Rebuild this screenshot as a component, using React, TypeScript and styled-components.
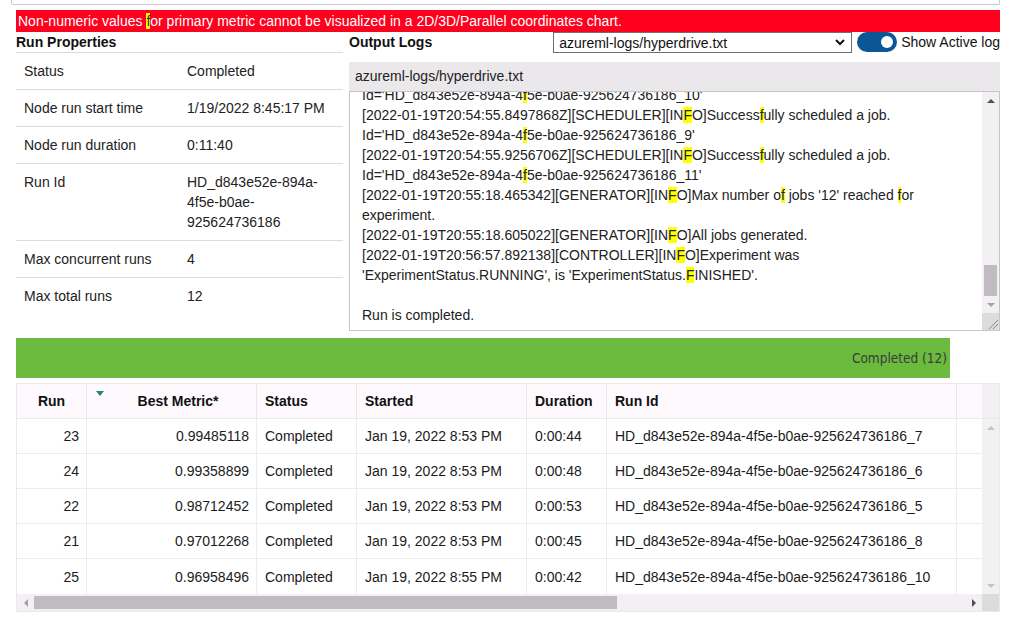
import React from 'react';
import styled, { createGlobalStyle } from 'styled-components';

const GlobalStyle = createGlobalStyle`
    html, body {
        margin: 0;
        padding: 0;
        background: #ffffff;
    }
    body {
        font-family: 'Liberation Sans', Arial, sans-serif;
        font-size: 14px;
        color: #1f1f1f;
    }
`;

type Prop = { label: string; value: React.ReactNode };

const runProps: Prop[] = [
    { label: 'Status', value: 'Completed' },
    { label: 'Node run start time', value: '1/19/2022 8:45:17 PM' },
    { label: 'Node run duration', value: '0:11:40' },
    {
        label: 'Run Id',
        value: (
            <>
                HD_d843e52e-894a-
                <br />
                4f5e-b0ae-
                <br />
                925624736186
            </>
        ),
    },
    { label: 'Max concurrent runs', value: '4' },
    { label: 'Max total runs', value: '12' },
];

const runs = [
    { run: 23, metric: '0.99485118', started: 'Jan 19, 2022 8:53 PM', duration: '0:00:44', id: 'HD_d843e52e-894a-4f5e-b0ae-925624736186_7' },
    { run: 24, metric: '0.99358899', started: 'Jan 19, 2022 8:53 PM', duration: '0:00:48', id: 'HD_d843e52e-894a-4f5e-b0ae-925624736186_6' },
    { run: 22, metric: '0.98712452', started: 'Jan 19, 2022 8:53 PM', duration: '0:00:53', id: 'HD_d843e52e-894a-4f5e-b0ae-925624736186_5' },
    { run: 21, metric: '0.97012268', started: 'Jan 19, 2022 8:53 PM', duration: '0:00:45', id: 'HD_d843e52e-894a-4f5e-b0ae-925624736186_8' },
    { run: 25, metric: '0.96958496', started: 'Jan 19, 2022 8:55 PM', duration: '0:00:42', id: 'HD_d843e52e-894a-4f5e-b0ae-925624736186_10' },
];

const COLS = '70px 170px 100px 170px 80px 350px 25px';

const Info = () => (
    <>
        [IN<Mark>F</Mark>O]
    </>
);

const Arrow: React.FC<{ dir: 'up' | 'down' | 'left' | 'right'; color?: string }> = ({ dir, color = '#7a7a7a' }) => {
    const pts = {
        up: '0,5 4,1 8,5',
        down: '0,1 8,1 4,5',
        left: '5,0 5,8 1,4',
        right: '1,0 1,8 5,4',
    }[dir];
    const w = dir === 'up' || dir === 'down' ? 8 : 6;
    const h = dir === 'up' || dir === 'down' ? 6 : 8;
    return (
        <svg width={w} height={h} viewBox={`0 0 ${w} ${h}`}>
            <polygon points={pts} fill={color} />
        </svg>
    );
};

const App: React.FC = () => {
    return (
        <Page>
            <GlobalStyle />
            <TopStub />
            <Banner>
                Non-numeric values <Mark>f</Mark>or primary metric cannot be visualized in a 2D/3D/Parallel coordinates chart.
            </Banner>
            <Columns>
                <PropsPanel>
                    <PanelTitle>Run Properties</PanelTitle>
                    {runProps.map((p) => (
                        <PropRow key={p.label}>
                            <PropLabel>{p.label}</PropLabel>
                            <PropValue>{p.value}</PropValue>
                        </PropRow>
                    ))}
                </PropsPanel>
                <LogsPanel>
                    <LogsToolbar>
                        <PanelTitle>Output Logs</PanelTitle>
                        <SelectWrap>
                            <Select defaultValue="hyperdrive">
                                <option value="hyperdrive">azureml-logs/hyperdrive.txt</option>
                            </Select>
                            <Chevron width="10" height="7" viewBox="0 0 10 7">
                                <polyline points="1,1 5,5 9,1" fill="none" stroke="#111" strokeWidth="2" />
                            </Chevron>
                        </SelectWrap>
                        <Toggle>
                            <Knob />
                        </Toggle>
                        <ToggleLabel>Show Active log</ToggleLabel>
                    </LogsToolbar>
                    <LogFrame>
                        <LogHeader>azureml-logs/hyperdrive.txt</LogHeader>
                        <LogArea>
                            <LogText>
                                <div>
                                    Id='HD_d843e52e-894a-4<Mark>f</Mark>5e-b0ae-925624736186_10'
                                </div>
                                <div>
                                    [2022-01-19T20:54:55.8497868Z][SCHEDULER]
                                    <Info />
                                    Success<Mark>f</Mark>ully scheduled a job.
                                </div>
                                <div>
                                    Id='HD_d843e52e-894a-4<Mark>f</Mark>5e-b0ae-925624736186_9'
                                </div>
                                <div>
                                    [2022-01-19T20:54:55.9256706Z][SCHEDULER]
                                    <Info />
                                    Success<Mark>f</Mark>ully scheduled a job.
                                </div>
                                <div>
                                    Id='HD_d843e52e-894a-4<Mark>f</Mark>5e-b0ae-925624736186_11'
                                </div>
                                <div>
                                    [2022-01-19T20:55:18.465342][GENERATOR]
                                    <Info />
                                    Max number o<Mark>f</Mark> jobs '12' reached <Mark>f</Mark>or
                                </div>
                                <div>experiment.</div>
                                <div>
                                    [2022-01-19T20:55:18.605022][GENERATOR]
                                    <Info />
                                    All jobs generated.
                                </div>
                                <div>
                                    [2022-01-19T20:56:57.892138][CONTROLLER]
                                    <Info />
                                    Experiment was
                                </div>
                                <div>
                                    'ExperimentStatus.RUNNING', is 'ExperimentStatus.<Mark>F</Mark>INISHED'.
                                </div>
                                <div>&nbsp;</div>
                                <div>Run is completed.</div>
                            </LogText>
                            <VScroll>
                                <ScrollBtn>
                                    <Arrow dir="up" color="#505050" />
                                </ScrollBtn>
                                <LogTrack>
                                    <Thumb $length={31} />
                                </LogTrack>
                                <ScrollBtn>
                                    <Arrow dir="down" color="#a3a3a3" />
                                </ScrollBtn>
                                <Resizer>
                                    <svg width="12" height="12" viewBox="0 0 12 12">
                                        <line x1="2" y1="11" x2="11" y2="2" stroke="#888" strokeWidth="1" />
                                        <line x1="6" y1="11" x2="11" y2="6" stroke="#888" strokeWidth="1" />
                                    </svg>
                                </Resizer>
                            </VScroll>
                        </LogArea>
                    </LogFrame>
                </LogsPanel>
            </Columns>
            <StatusBar>
                <StatusLabel>Completed (12)</StatusLabel>
            </StatusBar>
            <RunsTable>
                <HeaderRow>
                    <HeadCell $align="center">Run</HeadCell>
                    <HeadCell $align="center" $indent={13}>
                        <SortMark />
                        Best Metric*
                    </HeadCell>
                    <HeadCell>Status</HeadCell>
                    <HeadCell>Started</HeadCell>
                    <HeadCell>Duration</HeadCell>
                    <HeadCell>Run Id</HeadCell>
                    <HeadCell />
                    <ScrollCap />
                </HeaderRow>
                <BodyWrap>
                    <Rows>
                        {runs.map((r) => (
                            <Row key={r.id}>
                                <Cell $align="right">{r.run}</Cell>
                                <Cell $align="right">{r.metric}</Cell>
                                <Cell>Completed</Cell>
                                <Cell>{r.started}</Cell>
                                <Cell>{r.duration}</Cell>
                                <Cell>{r.id}</Cell>
                                <Cell />
                            </Row>
                        ))}
                    </Rows>
                    <TableVScroll>
                        <ScrollBtn>
                            <Arrow dir="up" color="#c4c4c4" />
                        </ScrollBtn>
                        <ScrollBtn>
                            <Arrow dir="down" color="#c4c4c4" />
                        </ScrollBtn>
                    </TableVScroll>
                </BodyWrap>
                <HScroll>
                    <HScrollBtn>
                        <Arrow dir="left" color="#a3a3a3" />
                    </HScrollBtn>
                    <HTrack>
                        <HThumb $length={583} />
                    </HTrack>
                    <HScrollBtn>
                        <Arrow dir="right" color="#505050" />
                    </HScrollBtn>
                    <Corner />
                </HScroll>
            </RunsTable>
        </Page>
    );
};

const Page = styled.div`
    width: 984px;
    padding: 0 9px 8px 16px;
`;

const TopStub = styled.div`
    margin-left: -5px;
    height: 4px;
    border: 1px solid #c9c9c9;
    border-top: none;
    border-radius: 0 0 2px 2px;
`;

const Mark = styled.span`
    background: #ffff00;
    color: inherit;
`;

const Banner = styled.div`
    margin-top: 5px;
    height: 22px;
    line-height: 22px;
    padding-left: 2px;
    background: #ff001e;
    color: #ffffff;
    font-size: 14px;
    white-space: nowrap;
    overflow: hidden;

    ${Mark} {
        color: #333;
    }
`;

const Columns = styled.div`
    display: grid;
    grid-template-columns: 327px 651px;
    column-gap: 6px;
    align-items: start;
`;

const PanelTitle = styled.div`
    font-weight: 700;
    font-size: 14px;
    line-height: 20px;
    color: #111;
`;

const PropsPanel = styled.div`
    display: flex;
    flex-direction: column;

    & > ${PanelTitle} {
        border-bottom: 1px solid #dcdcdc;
    }
`;

const PropRow = styled.div`
    display: grid;
    grid-template-columns: 163px 1fr;
    padding: 8px 0;
    line-height: 20px;
    border-bottom: 1px solid #dcdcdc;
    color: #222;

    &:last-child {
        border-bottom: none;
    }
`;

const PropLabel = styled.div`
    padding: 0 8px;
`;

const PropValue = styled.div`
    padding: 0 8px;
`;

const LogsPanel = styled.div`
    display: flex;
    flex-direction: column;
`;

const LogsToolbar = styled.div`
    display: flex;
    align-items: center;
    height: 20px;

    & > ${PanelTitle} {
        flex: 1;
    }
`;

const SelectWrap = styled.div`
    position: relative;
    width: 299px;
    height: 21px;
    margin-top: 1px;
`;

const Select = styled.select`
    appearance: none;
    width: 100%;
    height: 100%;
    border: 1px solid #6f6f6f;
    border-radius: 0;
    background: #ffffff;
    font-family: 'Liberation Sans', Arial, sans-serif;
    font-size: 14px;
    color: #111;
    padding: 0 20px 0 5px;
    margin: 0;
`;

const Chevron = styled.svg`
    position: absolute;
    right: 7px;
    top: 7px;
    pointer-events: none;
`;

const Toggle = styled.div`
    width: 40px;
    height: 20px;
    margin-left: 5px;
    border-radius: 10px;
    background: #0b5796;
    display: flex;
    align-items: center;
    justify-content: flex-end;
    padding-right: 4px;
    box-sizing: border-box;
`;

const Knob = styled.div`
    width: 12px;
    height: 12px;
    border-radius: 50%;
    background: #ffffff;
`;

const ToggleLabel = styled.span`
    margin-left: 4px;
    font-size: 14px;
    color: #111;
    white-space: nowrap;
`;

const LogFrame = styled.div`
    margin-top: 10px;
    display: flex;
    flex-direction: column;
`;

const LogHeader = styled.div`
    height: 29px;
    line-height: 29px;
    padding-left: 6px;
    background: #ebe8eb;
    color: #222;
`;

const LogArea = styled.div`
    display: flex;
    height: 238px;
    border: 1px solid #c6c6c6;
    background: #ffffff;
`;

const LogText = styled.div`
    flex: 1;
    overflow: hidden;
    padding-left: 12px;
    line-height: 20px;
    white-space: nowrap;
    color: #222;

    & > div:first-child {
        margin-top: -7px;
    }
`;

const VScroll = styled.div`
    width: 17px;
    display: flex;
    flex-direction: column;
    background: #f3f0f3;
`;

const ScrollBtn = styled.div`
    height: 17px;
    display: flex;
    align-items: center;
    justify-content: center;
`;

const LogTrack = styled.div`
    flex: 1;
    display: flex;
    flex-direction: column;
    justify-content: flex-end;
    align-items: center;
`;

const Thumb = styled.div<{ $length: number }>`
    width: 13px;
    height: ${(p) => p.$length}px;
    background: #c0bbc0;
`;

const Resizer = styled.div`
    height: 17px;
    background: #dcdcdc;
    display: flex;
    align-items: flex-end;
    justify-content: flex-end;
`;

const StatusBar = styled.div`
    margin-top: 7px;
    width: 934px;
    height: 40px;
    background: #6abb3e;
    display: flex;
    align-items: center;
    justify-content: flex-end;
    padding-right: 3px;
    box-sizing: border-box;
`;

const StatusLabel = styled.span`
    font-family: 'DejaVu Sans Condensed', 'Liberation Sans', sans-serif;
    font-stretch: condensed;
    font-size: 13.5px;
    color: #3b3b3b;
`;

const RunsTable = styled.div`
    margin-top: 5px;
    border: 1px solid #ebe7eb;
    display: flex;
    flex-direction: column;
`;

const HeaderRow = styled.div`
    display: grid;
    grid-template-columns: ${COLS} 17px;
    height: 34px;
    background: #fdf9fd;
    border-bottom: 1px solid #ebe7eb;
`;

const HeadCell = styled.div<{ $align?: 'left' | 'center' | 'right'; $indent?: number }>`
    position: relative;
    display: flex;
    align-items: center;
    justify-content: ${(p) => (p.$align === 'center' ? 'center' : p.$align === 'right' ? 'flex-end' : 'flex-start')};
    padding: 0 8px 0 ${(p) => 8 + (p.$indent ?? 0)}px;
    font-weight: 700;
    font-size: 14px;
    color: #111;
    border-right: 1px solid #ebe7eb;
    white-space: nowrap;

    &:nth-child(7) {
        border-right: none;
    }
`;

const SortMark = styled.span`
    position: absolute;
    left: 9px;
    top: 7px;
    width: 0;
    height: 0;
    border-left: 4.5px solid transparent;
    border-right: 4.5px solid transparent;
    border-top: 5px solid #1a8a6a;
`;

const ScrollCap = styled.div`
    background: #f3f0f3;
`;

const BodyWrap = styled.div`
    display: flex;
`;

const Rows = styled.div`
    width: 965px;
    display: flex;
    flex-direction: column;
`;

const Row = styled.div`
    display: grid;
    grid-template-columns: ${COLS};
    height: 34px;
    border-bottom: 1px solid #efebef;

    &:last-child {
        height: 35px;
        border-bottom: none;
    }
`;

const Cell = styled.div<{ $align?: 'left' | 'right' }>`
    display: flex;
    align-items: center;
    justify-content: ${(p) => (p.$align === 'right' ? 'flex-end' : 'flex-start')};
    padding: 0 7px 0 8px;
    font-size: 14px;
    color: #1b1b1b;
    border-right: 1px solid #efebef;
    white-space: nowrap;
    overflow: hidden;

    &:last-child {
        border-right: none;
    }
`;

const TableVScroll = styled.div`
    width: 17px;
    display: flex;
    flex-direction: column;
    justify-content: space-between;
    background: #f3f0f3;
`;

const HScroll = styled.div`
    display: flex;
    height: 17px;
    background: #f3f0f3;
`;

const HScrollBtn = styled.div`
    width: 17px;
    display: flex;
    align-items: center;
    justify-content: center;
`;

const HTrack = styled.div`
    flex: 1;
    display: flex;
    align-items: center;
`;

const HThumb = styled.div<{ $length: number }>`
    width: ${(p) => p.$length}px;
    height: 13px;
    background: #c0bbc0;
`;

const Corner = styled.div`
    width: 17px;
    background: #dcdcdc;
`;

export default App;
